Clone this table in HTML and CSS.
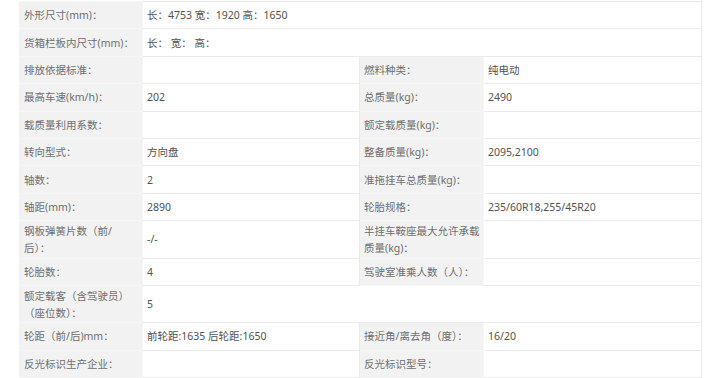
FILE: index.html
```html
<!DOCTYPE html>
<html lang="zh">
<head>
<meta charset="utf-8">
<link rel="stylesheet" href="styles.css">
</head>
<body>
<table class="spec">
  <colgroup>
    <col class="c-l1"><col class="c-v1"><col class="c-l2"><col class="c-v2">
  </colgroup>
  <tr><th>外形尺寸(mm)：</th><td colspan="3">长：4753 宽：1920 高：1650</td></tr>
  <tr><th>货箱栏板内尺寸(mm)：</th><td colspan="3">长： 宽： 高：</td></tr>
  <tr><th>排放依据标准：</th><td></td><th>燃料种类：</th><td>纯电动</td></tr>
  <tr><th>最高车速(km/h)：</th><td>202</td><th>总质量(kg)：</th><td>2490</td></tr>
  <tr><th>载质量利用系数：</th><td></td><th>额定载质量(kg)：</th><td></td></tr>
  <tr><th>转向型式：</th><td>方向盘</td><th>整备质量(kg)：</th><td>2095,2100</td></tr>
  <tr><th>轴数：</th><td>2</td><th>准拖挂车总质量(kg)：</th><td></td></tr>
  <tr><th>轴距(mm)：</th><td>2890</td><th>轮胎规格：</th><td>235/60R18,255/45R20</td></tr>
  <tr class="tall"><th>钢板弹簧片数（前/<br>后）：</th><td>-/-</td><th>半挂车鞍座最大允许承载<br>质量(kg)：</th><td></td></tr>
  <tr><th>轮胎数：</th><td>4</td><th>驾驶室准乘人数（人）：</th><td></td></tr>
  <tr class="tall"><th>额定载客（含驾驶员）<br>（座位数）：</th><td colspan="3">5</td></tr>
  <tr><th>轮距（前/后)mm：</th><td>前轮距:1635 后轮距:1650</td><th>接近角/离去角（度）：</th><td>16/20</td></tr>
  <tr><th>反光标识生产企业：</th><td></td><th>反光标识型号：</th><td></td></tr>
</table>
</body>
</html>
```

FILE: styles.css
```css
html, body {
  margin: 0;
  padding: 0;
  background: #ffffff;
}
body {
  padding: 1px 0 0 19px;
  font-family: "Noto Sans", "Noto Sans CJK SC", sans-serif;
  font-size: 10.5px;
  color: #555555;
  overflow: hidden;
}
.spec {
  border-collapse: collapse;
  table-layout: fixed;
  width: 682px;
}
.c-l1 { width: 123px; }
.c-v1 { width: 217px; }
.c-l2 { width: 124px; }
.c-v2 { width: 218px; }
.spec tr {
  height: 27.4px;
}
.spec tr.tall {
  height: 37.4px;
}
.spec th, .spec td {
  border: 1px solid #ebebeb;
  padding: 1px 0 0 4px;
  text-align: left;
  vertical-align: middle;
  font-weight: normal;
  line-height: 17px;
  white-space: nowrap;
  overflow: hidden;
}
.spec th {
  background: #f2f2f2;
  color: #6e6e6e;
  border-color: #f6f6f6;
  border-left-color: #f2f2f2;
}
.spec td {
  color: #505050;
}
```
